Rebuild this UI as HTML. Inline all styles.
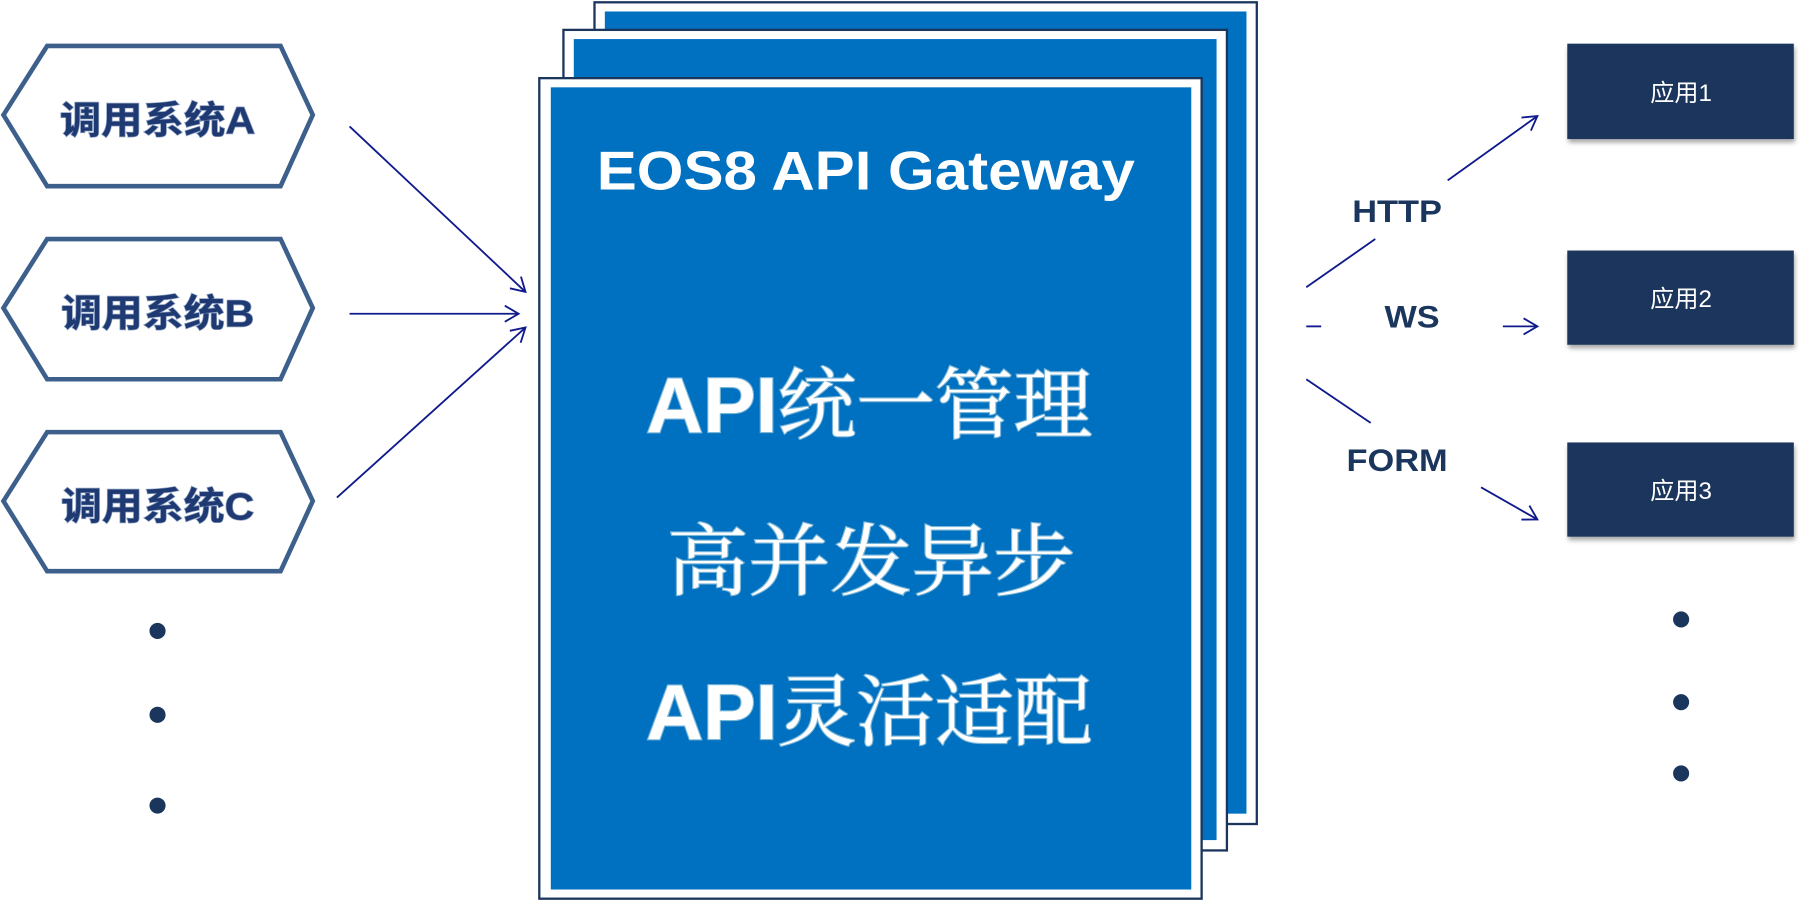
<!DOCTYPE html>
<html><head><meta charset="utf-8"><style>
html,body{margin:0;padding:0;background:#fff;width:1803px;height:901px;overflow:hidden}
svg{display:block}
.hx{fill:#fff;stroke:#3d5f8c;stroke-width:4}
.ht{font-family:"Liberation Sans","Noto Sans CJK SC",sans-serif;font-weight:bold;font-size:33px;fill:#1f3a72;stroke:#8fa3c4;stroke-width:1.2;paint-order:stroke}
.ar{stroke:#0f1a8c;stroke-width:1.6;fill:none}
.big{font-family:"Liberation Serif","Noto Serif CJK SC",serif;font-size:68px;fill:#fff;stroke:#7ab6d8;stroke-width:2;paint-order:stroke}
.apib{font-family:"Liberation Sans",sans-serif;font-weight:bold}
.lb{font-family:"Liberation Sans",sans-serif;font-weight:bold;font-size:27px;fill:#1b365d}
.app{font-family:"Liberation Sans","Noto Sans CJK SC",sans-serif;font-size:21px;fill:#fff;text-anchor:middle}
</style></head><body>
<svg width="1803" height="901" viewBox="0 0 1568 784" preserveAspectRatio="none" xmlns="http://www.w3.org/2000/svg">
<defs>
<marker id="m" markerWidth="20" markerHeight="20" refX="14" refY="8" orient="auto" markerUnits="userSpaceOnUse">
<path d="M2,1 L14,8 L2,15" fill="none" stroke="#0f1a8c" stroke-width="1.6"/></marker>
<filter id="sh" x="-10%" y="-10%" width="130%" height="140%"><feDropShadow dx="1" dy="3" stdDeviation="2" flood-color="#000" flood-opacity="0.35"/></filter>
</defs>
<polygon class="hx" points="3,100 41,40 244,40 272,100 244,162 41,162"/>
<polygon class="hx" points="3,268 41,208 244,208 272,268 244,330 41,330"/>
<polygon class="hx" points="3,436 41,376 244,376 272,436 244,497 41,497"/>
<text class="ht" x="52" y="116" textLength="170" lengthAdjust="spacingAndGlyphs">调用系统A</text>
<text class="ht" x="53" y="284" textLength="168" lengthAdjust="spacingAndGlyphs">调用系统B</text>
<text class="ht" x="53" y="452" textLength="168" lengthAdjust="spacingAndGlyphs">调用系统C</text>
<circle cx="137" cy="549" r="7" fill="#1b365d"/>
<circle cx="137" cy="622" r="7" fill="#1b365d"/>
<circle cx="137" cy="701" r="7" fill="#1b365d"/>
<line class="ar" x1="304" y1="110" x2="457" y2="254" marker-end="url(#m)"/>
<line class="ar" x1="304" y1="273" x2="451" y2="273" marker-end="url(#m)"/>
<line class="ar" x1="293" y1="433" x2="457" y2="285" marker-end="url(#m)"/>
<rect x="517" y="2" width="576" height="715" fill="#fff" stroke="#1b365d" stroke-width="2"/>
<rect x="526" y="10" width="558" height="698" fill="#0070c0"/>
<rect x="490" y="26" width="577" height="714" fill="#fff" stroke="#1b365d" stroke-width="2"/>
<rect x="499" y="34" width="559" height="697" fill="#0070c0"/>
<rect x="469" y="68" width="576" height="714" fill="#fff" stroke="#1b365d" stroke-width="2"/>
<rect x="479" y="76" width="557" height="698" fill="#0070c0"/>
<text x="519" y="165" textLength="468" lengthAdjust="spacingAndGlyphs" font-family="Liberation Sans,sans-serif" font-weight="bold" font-size="48" fill="#fff">EOS8 API Gateway</text>
<text class="big" x="562" y="376" textLength="388" lengthAdjust="spacingAndGlyphs"><tspan class="apib">API</tspan>统一管理</text>
<text class="big" x="580" y="512" textLength="355" lengthAdjust="spacingAndGlyphs">高并发异步</text>
<text class="big" x="562" y="643" textLength="388" lengthAdjust="spacingAndGlyphs"><tspan class="apib">API</tspan>灵活适配</text>
<line class="ar" x1="1136" y1="250" x2="1196" y2="208"/>
<line class="ar" x1="1259" y1="157" x2="1337" y2="101" marker-end="url(#m)"/>
<text class="lb" x="1176" y="193" textLength="78" lengthAdjust="spacingAndGlyphs">HTTP</text>
<line class="ar" x1="1136" y1="284" x2="1149" y2="284" stroke-width="2"/>
<text class="lb" x="1204" y="285" textLength="48" lengthAdjust="spacingAndGlyphs">WS</text>
<line class="ar" x1="1307" y1="284" x2="1337" y2="284" marker-end="url(#m)"/>
<line class="ar" x1="1136" y1="330" x2="1192" y2="368"/>
<text class="lb" x="1171" y="410" textLength="88" lengthAdjust="spacingAndGlyphs">FORM</text>
<line class="ar" x1="1288" y1="424" x2="1337" y2="452" marker-end="url(#m)"/>
<rect x="1363" y="38" width="197" height="83" fill="#1b365d" filter="url(#sh)"/>
<rect x="1363" y="218" width="197" height="82" fill="#1b365d" filter="url(#sh)"/>
<rect x="1363" y="385" width="197" height="82" fill="#1b365d" filter="url(#sh)"/>
<text class="app" x="1462" y="88">应用1</text>
<text class="app" x="1462" y="267">应用2</text>
<text class="app" x="1462" y="434">应用3</text>
<circle cx="1462" cy="539" r="7" fill="#1b365d"/>
<circle cx="1462" cy="611" r="7" fill="#1b365d"/>
<circle cx="1462" cy="673" r="7" fill="#1b365d"/>
</svg>
</body></html>
